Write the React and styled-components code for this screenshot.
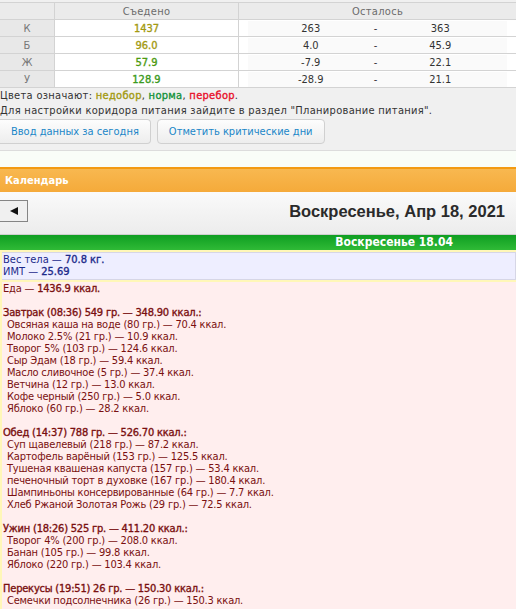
import React from 'react';
import styled, { createGlobalStyle } from 'styled-components';

const GlobalStyle = createGlobalStyle`
  body {
    margin: 0;
    background: #ffffff;
    font-family: "DejaVu Sans Condensed", "DejaVu Sans", Tahoma, sans-serif;
    font-stretch: condensed;
    font-size: 11px;
  }
`;

const stats = [
  { key: 'К', eaten: '1437', color: '#a39a12', from: '263', to: '363' },
  { key: 'Б', eaten: '96.0', color: '#a39a12', from: '4.0', to: '45.9' },
  { key: 'Ж', eaten: '57.9', color: '#4c9a10', from: '-7.9', to: '22.1' },
  { key: 'У', eaten: '128.9', color: '#3a9a20', from: '-28.9', to: '21.1' },
];

const meals = [
  {
    title: 'Завтрак (08:36) 549 гр. — 348.90 ккал.:',
    items: [
      'Овсяная каша на воде (80 гр.) — 70.4 ккал.',
      'Молоко 2.5% (21 гр.) — 10.9 ккал.',
      'Творог 5% (103 гр.) — 124.6 ккал.',
      'Сыр Эдам (18 гр.) — 59.4 ккал.',
      'Масло сливочное (5 гр.) — 37.4 ккал.',
      'Ветчина (12 гр.) — 13.0 ккал.',
      'Кофе черный (250 гр.) — 5.0 ккал.',
      'Яблоко (60 гр.) — 28.2 ккал.',
    ],
  },
  {
    title: 'Обед (14:37) 788 гр. — 526.70 ккал.:',
    items: [
      'Суп щавелевый (218 гр.) — 87.2 ккал.',
      'Картофель варёный (153 гр.) — 125.5 ккал.',
      'Тушеная квашеная капуста (157 гр.) — 53.4 ккал.',
      'печеночный торт в духовке (167 гр.) — 180.4 ккал.',
      'Шампиньоны консервированные (64 гр.) — 7.7 ккал.',
      'Хлеб Ржаной Золотая Рожь (29 гр.) — 72.5 ккал.',
    ],
  },
  {
    title: 'Ужин (18:26) 525 гр. — 411.20 ккал.:',
    items: [
      'Творог 4% (200 гр.) — 208.0 ккал.',
      'Банан (105 гр.) — 99.8 ккал.',
      'Яблоко (220 гр.) — 103.4 ккал.',
    ],
  },
  {
    title: 'Перекусы (19:51) 26 гр. — 150.30 ккал.:',
    items: ['Семечки подсолнечника (26 гр.) — 150.3 ккал.'],
  },
];

function App() {
  return (
    <>
      <GlobalStyle />
      <Top>
        <StatsTable>
          <thead>
            <tr>
              <HeadCell style={{ width: 54 }} />
              <HeadCell style={{ width: 183 }}>Съедено</HeadCell>
              <HeadCell>Осталось</HeadCell>
            </tr>
          </thead>
          <tbody>
            {stats.map((s) => (
              <tr key={s.key}>
                <KeyCell>{s.key}</KeyCell>
                <EatenCell $color={s.color}>{s.eaten}</EatenCell>
                <RangeCell>
                  <Range>
                    <span>{s.from}</span>
                    <span>-</span>
                    <span>{s.to}</span>
                  </Range>
                </RangeCell>
              </tr>
            ))}
          </tbody>
        </StatsTable>
        <Note>
          Цвета означают: <Tone $c="#a39a12">недобор</Tone>, <Tone $c="#14923a">норма</Tone>,{' '}
          <Tone $c="#e8102a">перебор</Tone>.
        </Note>
        <Note>Для настройки коридора питания зайдите в раздел "Планирование питания".</Note>
        <Buttons>
          <ActionButton>Ввод данных за сегодня</ActionButton>
          <ActionButton>Отметить критические дни</ActionButton>
        </Buttons>
      </Top>
      <Spacer />
      <PanelHeader>Календарь</PanelHeader>
      <NavBar>
        <ArrowButton>
          <svg width="10" height="10" viewBox="0 0 10 10">
            <polygon points="9,1 9,9 1,5" fill="#111" />
          </svg>
        </ArrowButton>
        <DayTitle>Воскресенье, Апр 18, 2021</DayTitle>
      </NavBar>
      <DayBar>Воскресенье 18.04</DayBar>
      <Entries>
        <BodyBox>
          <div>Вес тела — <Strong>70.8 кг.</Strong></div>
          <div>ИМТ — <Strong>25.69</Strong></div>
        </BodyBox>
        <FoodBox>
          <Line>Еда — <Strong>1436.9 ккал.</Strong></Line>
          {meals.map((m) => (
            <Meal key={m.title}>
              <Line><Strong>{m.title}</Strong></Line>
              {m.items.map((it) => (
                <Item key={it}>{it}</Item>
              ))}
            </Meal>
          ))}
        </FoodBox>
      </Entries>
    </>
  );
}

export default App;

const Strong = styled.span`
  -webkit-text-stroke: 0.35px currentColor;
`;

const Top = styled.div`
  background: #f0f0f0;
  padding-top: 2px;
  padding-bottom: 6px;
  border-bottom: 1px solid #dcdcdc;
`;

const StatsTable = styled.table`
  width: 100%;
  border-collapse: collapse;
  background: #ffffff;
  td, th {
    border: 1px solid #d3d3d3;
    height: 16px;
    padding: 0;
  }
  tr > :first-child {
    border-left: none;
  }
  tr > :last-child {
    border-right: none;
  }
`;

const HeadCell = styled.th`
  background: #ebebeb;
  color: #6b6b6b;
  font-weight: normal;
  text-align: center;
  letter-spacing: 0.3px;
`;

const KeyCell = styled.td`
  background: #e8e8e8;
  color: #777777;
  text-align: center;
`;

const EatenCell = styled.td`
  color: ${(p) => p.$color};
  -webkit-text-stroke: 0.35px currentColor;
  text-align: center;
`;

const RangeCell = styled.td`
  padding: 0 9px !important;
`;

const Range = styled.div`
  display: grid;
  grid-template-columns: 1fr 4px 1fr;
  background: #fafafa;
  color: #333333;
  text-align: center;
  line-height: 15px;
  padding-right: 4px;
`;

const Note = styled.div`
  color: #333333;
  line-height: 15px;
  letter-spacing: 0.3px;
`;

const Tone = styled.span`
  color: ${(p) => p.$c};
  -webkit-text-stroke: 0.35px currentColor;
`;

const Buttons = styled.div`
  display: flex;
  gap: 6px;
  margin-top: 1px;
`;

const ActionButton = styled.button`
  font-family: inherit;
  font-stretch: inherit;
  font-size: 11px;
  color: #1a86c8;
  background: linear-gradient(#fdfdfd, #ededed);
  border: 1px solid #d0d0d0;
  border-radius: 4px;
  height: 25px;
  padding: 0 11px;
  cursor: pointer;
  &:first-child {
    border-left: none;
    border-top-left-radius: 0;
    border-bottom-left-radius: 0;
  }
`;

const Spacer = styled.div`
  height: 16px;
  background: #f9fdf8;
`;

const PanelHeader = styled.div`
  background: linear-gradient(#f8b850, #f5aa3a);
  border-top: 2px solid #f39a12;
  color: #ffffff;
  font-weight: bold;
  height: 23px;
  line-height: 23px;
  padding-left: 5px;
`;

const NavBar = styled.div`
  display: flex;
  align-items: center;
  justify-content: space-between;
  height: 42px;
  background: linear-gradient(#fafafa, #ececec);
  border-bottom: 1px solid #cfcfcf;
`;

const ArrowButton = styled.button`
  width: 29px;
  height: 22px;
  margin-left: -1px;
  margin-top: -4px;
  background: #f0f0f0;
  border: 1px solid #858585;
  display: flex;
  align-items: center;
  justify-content: center;
  padding: 0;
`;

const DayTitle = styled.div`
  font-family: "Liberation Sans", Arial, sans-serif;
  font-stretch: normal;
  font-weight: bold;
  font-size: 16.5px;
  color: #2a2a2a;
  padding-right: 11px;
  margin-top: -4px;
`;

const DayBar = styled.div`
  background: linear-gradient(#0f9e22, #2fba36);
  color: #ffffff;
  font-weight: bold;
  font-size: 12px;
  height: 15px;
  line-height: 15px;
  text-align: right;
  padding-right: 63px;
`;

const Entries = styled.div`
  border-left: 2px solid #fff7b8;
  border-top: 2px solid #fff7b8;
`;

const BodyBox = styled.div`
  background: #eeeeff;
  color: #1c2a8a;
  border: 1px solid #d6d6e6;
  border-left: none;
  padding: 1px;
  line-height: 12px;
`;

const FoodBox = styled.div`
  background: #ffeeee;
  color: #7a1010;
  border-top: 2px solid #fff7b8;
  padding: 1px 1px 20px 1px;
  line-height: 12px;
  letter-spacing: -0.2px;
`;

const Line = styled.div``;

const Meal = styled.div`
  margin-top: 12px;
`;

const Item = styled.div`
  padding-left: 4px;
`;
